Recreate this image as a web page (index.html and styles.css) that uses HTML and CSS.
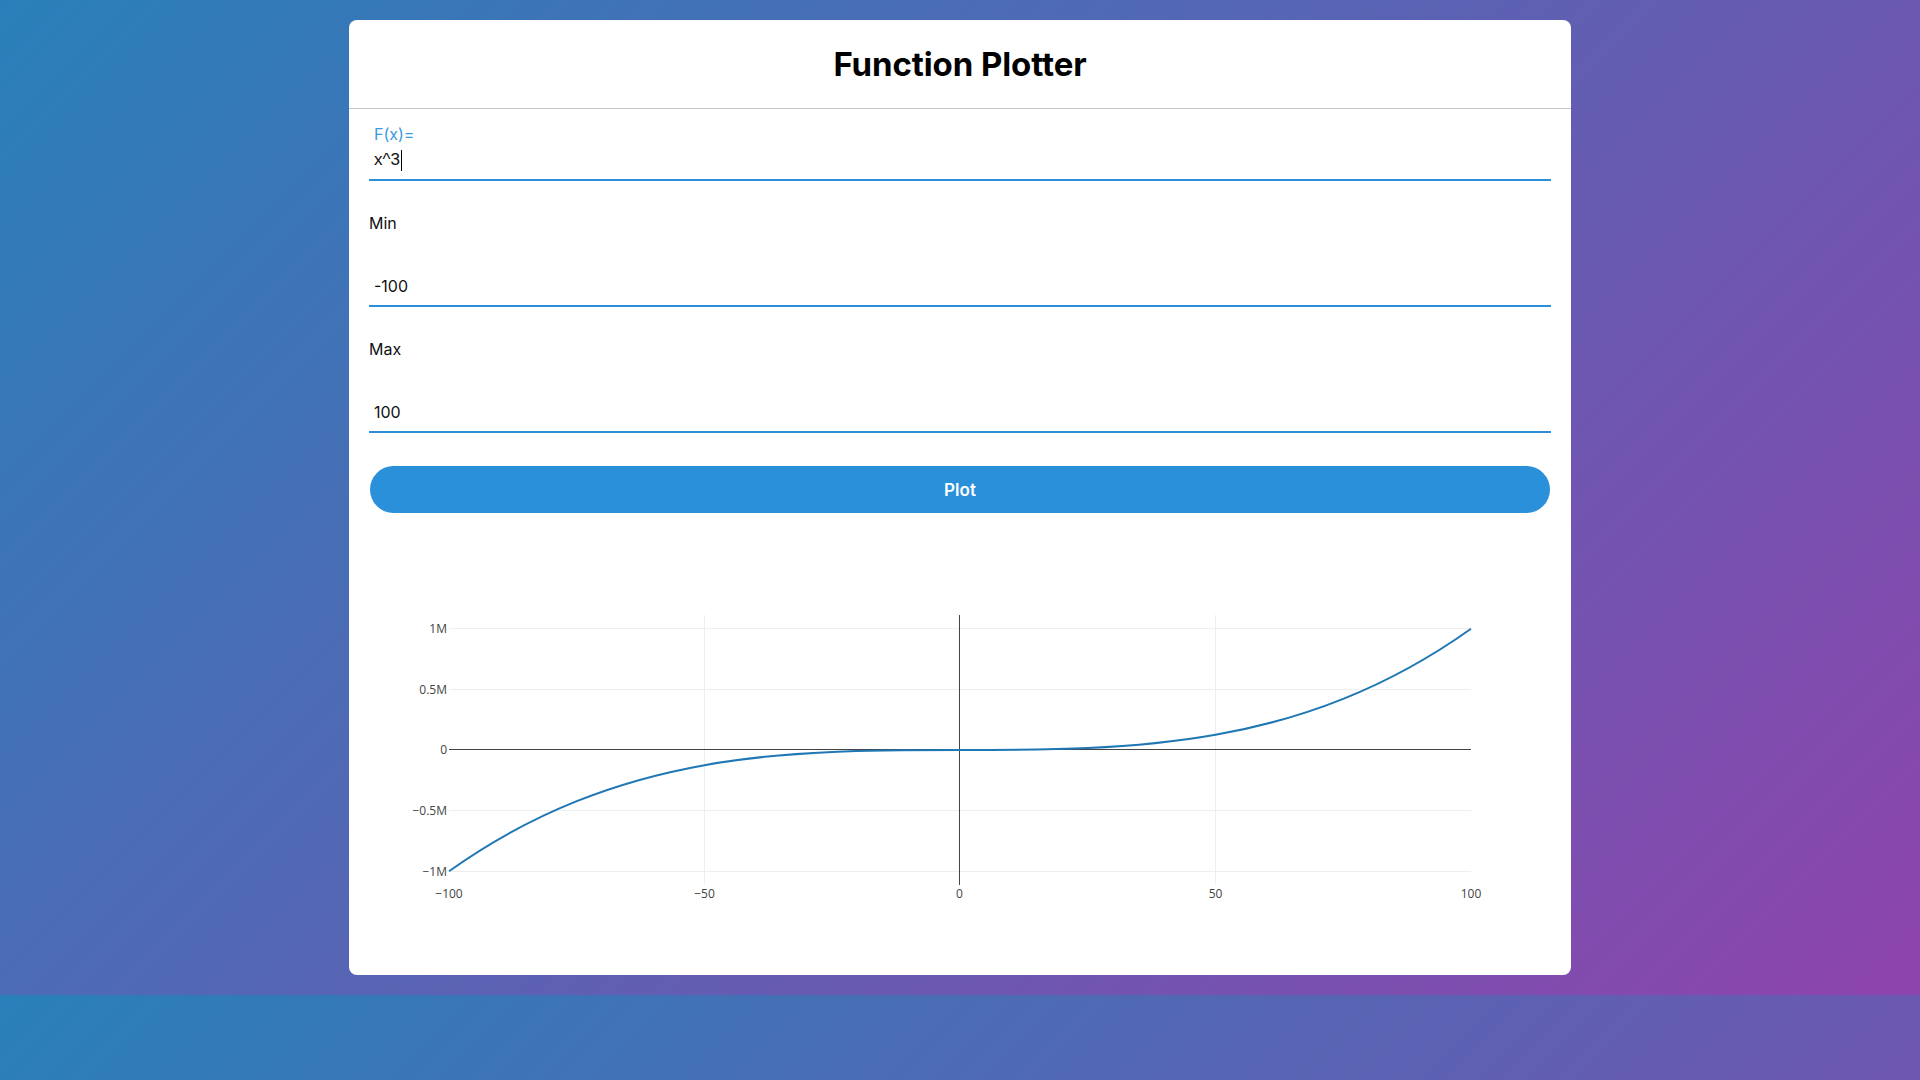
FILE: index.html
```html
<!DOCTYPE html>
<html lang="en">
<head>
<meta charset="utf-8">
<title>Function Plotter</title>
<link rel="stylesheet" href="styles.css">
</head>
<body>
<main class="card">
  <header class="header">
    <h1 class="title">Function Plotter</h1>
  </header>
  <section class="form">
    <div class="fx-field">
      <div class="fx-label">F(x)=</div>
      <div class="fx-input"><span class="fx-text">x^3</span><span class="caret"></span></div>
    </div>
    <div class="field">
      <div class="label">Min</div>
      <div class="value">-100</div>
    </div>
    <div class="field">
      <div class="label">Max</div>
      <div class="value">100</div>
    </div>
    <button class="plot-btn" type="button">Plot</button>
    <svg class="chart" width="1182" height="430" viewBox="0 0 1182 430" xmlns="http://www.w3.org/2000/svg">
      <g class="grid">
        <line x1="335.5" y1="80" x2="335.5" y2="350"/>
        <line x1="846.5" y1="80" x2="846.5" y2="350"/>
        <line x1="80" y1="93.5" x2="1102" y2="93.5"/>
        <line x1="80" y1="154.5" x2="1102" y2="154.5"/>
        <line x1="80" y1="275.5" x2="1102" y2="275.5"/>
        <line x1="80" y1="336.5" x2="1102" y2="336.5"/>
      </g>
      <g class="zero">
        <line x1="80" y1="214.5" x2="1102" y2="214.5"/>
        <line x1="590.5" y1="80" x2="590.5" y2="350"/>
      </g>
      <path class="curve" d="M80,336.3 C420.67,93.7 761.33,336.3 1102,93.7"/>
      <g class="ticks ytick">
        <text x="78" y="97.7">1M</text>
        <text x="78" y="158.7">0.5M</text>
        <text x="78" y="218.7">0</text>
        <text x="78" y="279.7">−0.5M</text>
        <text x="78" y="340.7">−1M</text>
      </g>
      <g class="ticks xtick">
        <text x="80" y="362.5">−100</text>
        <text x="335.5" y="362.5">−50</text>
        <text x="590.5" y="362.5">0</text>
        <text x="846.5" y="362.5">50</text>
        <text x="1102" y="362.5">100</text>
      </g>
    </svg>
  </section>
</main>
</body>
</html>
```

FILE: styles.css
```css
* {
  box-sizing: border-box;
}

html {
  margin: 0;
}

body {
  margin: 0;
  padding: 20px 0;
  background: linear-gradient(135deg, #2980b9, #8e44ad);
  font-family: "Inter", "Lato", "Noto Sans", sans-serif;
  color: #111;
}

.card {
  width: 1222px;
  margin: 0 auto;
  background: #ffffff;
  border-radius: 8px;
}

.header {
  height: 89px;
  border-bottom: 1px solid #c6c6c6;
  display: flex;
  align-items: center;
  justify-content: center;
}

.title {
  margin: 0;
  font-size: 33px;
  font-weight: 700;
  color: #000;
  letter-spacing: -0.1px;
}

.form {
  padding: 0 20px 10px 20px;
}

.fx-field {
  height: 72px;
  padding-top: 16px;
  border-bottom: 2px solid #2b90d9;
}

.fx-label {
  padding-left: 5px;
  font-size: 16px;
  line-height: 18px;
  color: #3a9ae0;
}

.fx-input {
  display: flex;
  align-items: center;
  padding-left: 5px;
  height: 22px;
  margin-top: 6px;
}

.fx-text {
  font-family: "Liberation Sans", Arial, sans-serif;
  font-size: 17px;
  line-height: 22px;
  color: #111;
}

.caret {
  display: inline-block;
  width: 1px;
  height: 21px;
  margin-left: 1px;
  background: #000;
}

.field {
  height: 126px;
  padding-top: 30px;
  border-bottom: 2px solid #2b90d9;
}

.label {
  font-size: 16px;
  line-height: 24px;
  color: #111;
}

.value {
  margin-top: 39px;
  padding-left: 5px;
  font-size: 16px;
  line-height: 24px;
  color: #111;
}

.plot-btn {
  display: block;
  width: 1180px;
  height: 47px;
  margin: 33px 0 0 1px;
  border: none;
  border-radius: 24px;
  background: #2990d9;
  color: #ffffff;
  font-family: "Inter", "Lato", sans-serif;
  font-size: 17px;
  font-weight: 600;
}

.chart {
  display: block;
  margin-top: 22px;
}

.grid line {
  stroke: #eeeeee;
  stroke-width: 1;
}

.zero line {
  stroke: #444444;
  stroke-width: 1;
}

.curve {
  fill: none;
  stroke: #1f77b4;
  stroke-width: 2;
}

.ticks text {
  font-family: "Open Sans", verdana, arial, sans-serif;
  font-size: 12px;
  fill: #444444;
}

.ytick text {
  text-anchor: end;
}

.xtick text {
  text-anchor: middle;
}
```
